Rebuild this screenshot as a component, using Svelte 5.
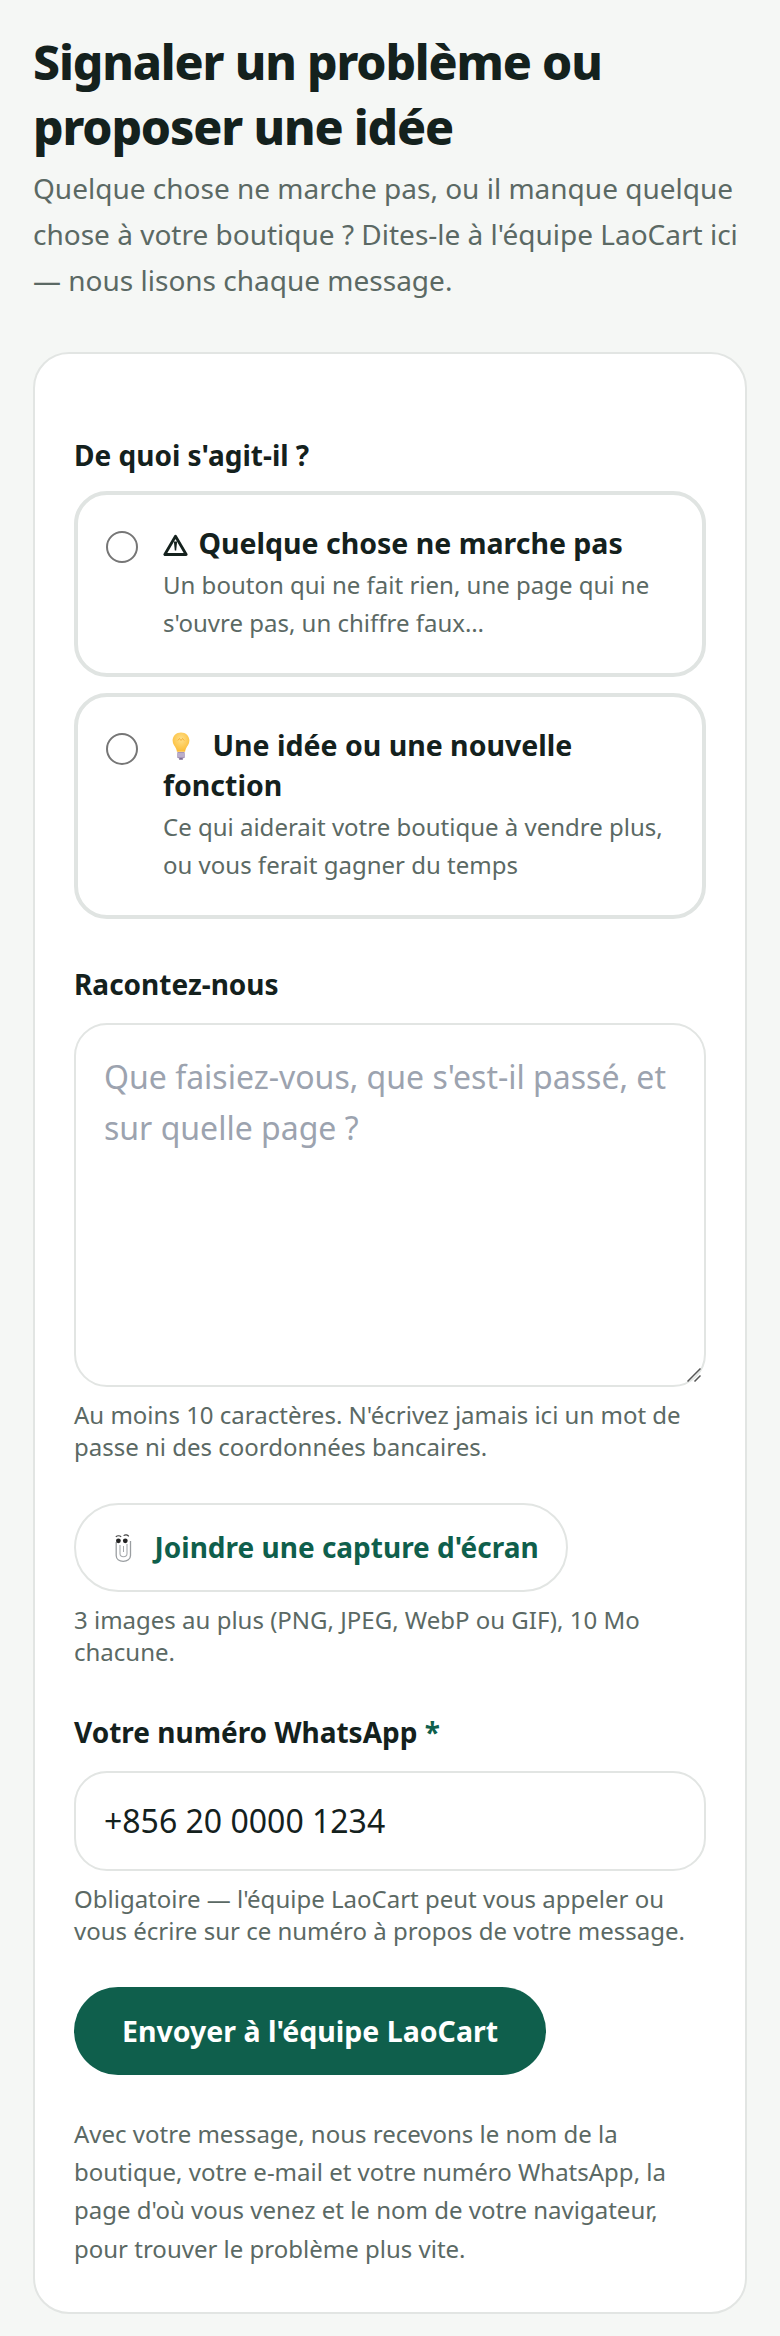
<script lang="ts">
	let kind = $state('');
	let phone = $state('+856 20 0000 1234');
	let message = $state('');
</script>

<main class="page">
	<h1>Signaler un problème ou proposer une idée</h1>
	<p class="intro">
		Quelque chose ne marche pas, ou il manque quelque chose à votre boutique ? Dites-le à l'équipe LaoCart ici — nous lisons chaque message.
	</p>

	<form class="card" onsubmit={(e) => e.preventDefault()}>
		<div class="field first">
			<span class="label options-label">De quoi s'agit-il ?</span>
			<div class="options">
				<label class="option">
					<input type="radio" name="kind" value="bug" bind:group={kind} />
					<span class="option-text">
						<strong>
							<svg class="warn" viewBox="0 0 25 22" aria-hidden="true">
								<path d="M12.500 2.200 1.800 20.500h21.400Z" fill="none" stroke="#14211d" stroke-width="2.800" stroke-linejoin="round" />
								<path d="M10.900 7.500h3.200l-.9 9h-1.400Z" fill="#14211d" />
							</svg>
							Quelque chose ne marche pas
						</strong>
						<small>Un bouton qui ne fait rien, une page qui ne s'ouvre pas, un chiffre faux…</small>
					</span>
				</label>
				<label class="option">
					<input type="radio" name="kind" value="idea" bind:group={kind} />
					<span class="option-text">
						<strong>
							<svg class="bulb" viewBox="0 0 18 28" aria-hidden="true">
								<defs>
									<radialGradient id="glass" cx="0.5" cy="0.35" r="0.7">
										<stop offset="0" stop-color="#ffe08a" />
										<stop offset="1" stop-color="#fbb92f" />
									</radialGradient>
								</defs>
								<path d="M9 .5C4.200.5.600 4 .6 8.600c0 3.600 2.300 5.600 3.500 8.200.5 1.100.7 2 .8 3h8.200c.1-1 .3-1.900.8-3 1.200-2.600 3.500-4.600 3.500-8.200C17.400 4 13.800.5 9 .5Z" fill="url(#glass)" />
								<path d="M5.800 8.500 7.500 6.500 9 8.500 10.500 6.500 12.200 8.500" fill="none" stroke="#f0a020" stroke-width=".7" />
								<rect x="5" y="20" width="8" height="6.200" rx="1.400" fill="#a594b8" />
								<path d="M5 22h8M5 24h8" stroke="#ddd5e6" stroke-width=".8" />
								<rect x="7" y="26" width="4" height="1.800" rx=".9" fill="#7d6c92" />
							</svg>
							Une idée ou une nouvelle fonction
						</strong>
						<small>Ce qui aiderait votre boutique à vendre plus, ou vous ferait gagner du temps</small>
					</span>
				</label>
			</div>
		</div>

		<div class="field">
			<label class="label" for="message">Racontez-nous</label>
			<div class="area">
				<textarea id="message" rows="6" placeholder="Que faisiez-vous, que s'est-il passé, et sur quelle page ?" bind:value={message}></textarea>
				<svg class="grip" viewBox="0 0 14 14" aria-hidden="true">
					<path d="M.5 13.500 13.500.5M7.500 13.500l6-6" stroke="#555" stroke-width="1.500" fill="none" />
				</svg>
			</div>
			<p class="hint">Au moins 10 caractères. N'écrivez jamais ici un mot de passe ni des coordonnées bancaires.</p>
		</div>

		<div class="field tight">
			<button type="button" class="attach">
				<svg class="clip" viewBox="0 0 17 29" aria-hidden="true">
					<path d="M1.200 9v13.500c0 3.500 3 5.800 7 5.800s7.300-2.300 7.300-5.800V8" fill="none" stroke="#9a9ea1" stroke-width="1.300" />
					<path d="M5 12v8.500c0 1.900 1.500 3.200 3.500 3.200s3.500-1.300 3.500-3.200V11" fill="none" stroke="#a5a9ac" stroke-width="1.100" />
					<path d="M8.500 13v6" stroke="#a5a9ac" stroke-width="1" />
					<circle cx="3.400" cy="7.800" r="2.400" fill="#222" />
					<circle cx="10.300" cy="7.800" r="2.400" fill="#222" />
					<path d="M.8 3.800C2.200 2.400 4.800 2.300 6.200 3.800M8.600 2.600c1.600-1.200 4-1 5.200.8" fill="none" stroke="#444" stroke-width="1.100" />
				</svg>
				Joindre une capture d'écran
			</button>
			<p class="hint">3 images au plus (PNG, JPEG, WebP ou GIF), 10 Mo chacune.</p>
		</div>

		<div class="field">
			<label class="label" for="whatsapp">Votre numéro WhatsApp <span class="req">*</span></label>
			<input id="whatsapp" class="text" type="tel" bind:value={phone} />
			<p class="hint">Obligatoire — l'équipe LaoCart peut vous appeler ou vous écrire sur ce numéro à propos de votre message.</p>
		</div>

		<button type="submit" class="send">Envoyer à l'équipe LaoCart</button>

		<p class="note">
			Avec votre message, nous recevons le nom de la boutique, votre e-mail et votre numéro WhatsApp, la page d'où vous venez et le nom de votre navigateur, pour trouver le problème plus vite.
		</p>
	</form>
</main>

<style>
	:global(body) {
		margin: 0;
		background: #f5f7f5;
	}

	.page {
		box-sizing: border-box;
		padding: 29px 33px 25px;
		font-family: 'Noto Sans', sans-serif;
		color: #14211d;
	}

	h1 {
		margin: 0;
		font-size: 48px;
		line-height: 65px;
		font-weight: 800;
		letter-spacing: -1.130px;
	}

	.intro {
		margin: 6px 0 48.500px;
		font-size: 28px;
		line-height: 46px;
		color: #5b6964;
	}

	.card {
		box-sizing: border-box;
		background: #fff;
		border: 2px solid #e2e5e3;
		border-radius: 36px;
		padding: 81px 39px 44px;
	}

	.field {
		display: flex;
		flex-direction: column;
		align-items: flex-start;
		margin-bottom: 40px;
		padding-top: 5px;
	}

	.field.first,
	.field.tight {
		padding-top: 0;
	}

	.field.tight {
		margin-bottom: 39px;
	}

	.label {
		font-size: 28px;
		line-height: 40px;
		font-weight: 700;
		margin-bottom: 19px;
	}

	.options-label {
		margin-bottom: 16px;
	}

	.req {
		color: #0f5f4c;
	}

	.options {
		display: flex;
		flex-direction: column;
		gap: 16px;
		width: 100%;
	}

	.option {
		display: flex;
		gap: 25px;
		padding: 28px 28px 31px;
		border: 4px solid #e0e4e2;
		border-radius: 33px;
	}

	.option input {
		flex: none;
		appearance: none;
		box-sizing: border-box;
		width: 32px;
		height: 32px;
		margin: 8px 0 0;
		border: 2.500px solid #767676;
		border-radius: 50%;
		background: #fff;
	}

	.option-text {
		display: flex;
		flex-direction: column;
		gap: 3px;
	}

	.option-text strong {
		font-size: 28.500px;
		line-height: 40px;
	}

	.option-text small {
		font-size: 24px;
		line-height: 38px;
		color: #5b6964;
	}

	.warn {
		width: 25px;
		height: 22px;
		margin-right: 3px;
		vertical-align: -2px;
	}

	.bulb {
		width: 18px;
		height: 28px;
		margin: 0 15px 0 9px;
		vertical-align: -4px;
	}

	.area {
		position: relative;
		width: 100%;
		display: flex;
	}

	textarea {
		box-sizing: border-box;
		width: 100%;
		height: 364px;
		padding: 26px 28px;
		border: 2px solid #e2e5e3;
		border-radius: 33px;
		font: 32px/51.200px 'Noto Sans', sans-serif;
		color: #14211d;
		background: #fff;
		resize: none;
	}

	textarea::placeholder,
	.text::placeholder {
		color: #9ca3af;
	}

	.grip {
		position: absolute;
		right: 5px;
		bottom: 5px;
		width: 14px;
		height: 14px;
		pointer-events: none;
	}

	.text {
		box-sizing: border-box;
		width: 100%;
		height: 100px;
		padding: 0 28px;
		border: 2px solid #e2e5e3;
		border-radius: 33px;
		font: 32px 'Noto Sans', sans-serif;
		color: #14211d;
		background: #fff;
	}

	.hint {
		margin: 12px 0 0;
		font-size: 24px;
		line-height: 32px;
		color: #5b6964;
	}

	.attach {
		display: flex;
		align-items: center;
		gap: 22.500px;
		height: 89px;
		padding: 0 27px 0 39px;
		border: 2px solid #e2e5e3;
		border-radius: 45px;
		background: #fff;
		font: 700 28px 'Noto Sans', sans-serif;
		color: #0f5f4c;
	}

	.clip {
		width: 17px;
		height: 29px;
	}

	.send {
		display: block;
		height: 88px;
		padding: 0 48px;
		border: none;
		border-radius: 44px;
		background: #0f5f4c;
		font: 700 28.500px 'Noto Sans', sans-serif;
		color: #fff;
	}

	.note {
		margin: 40px 0 0;
		font-size: 24px;
		line-height: 38.400px;
		color: #5b6964;
	}
</style>
